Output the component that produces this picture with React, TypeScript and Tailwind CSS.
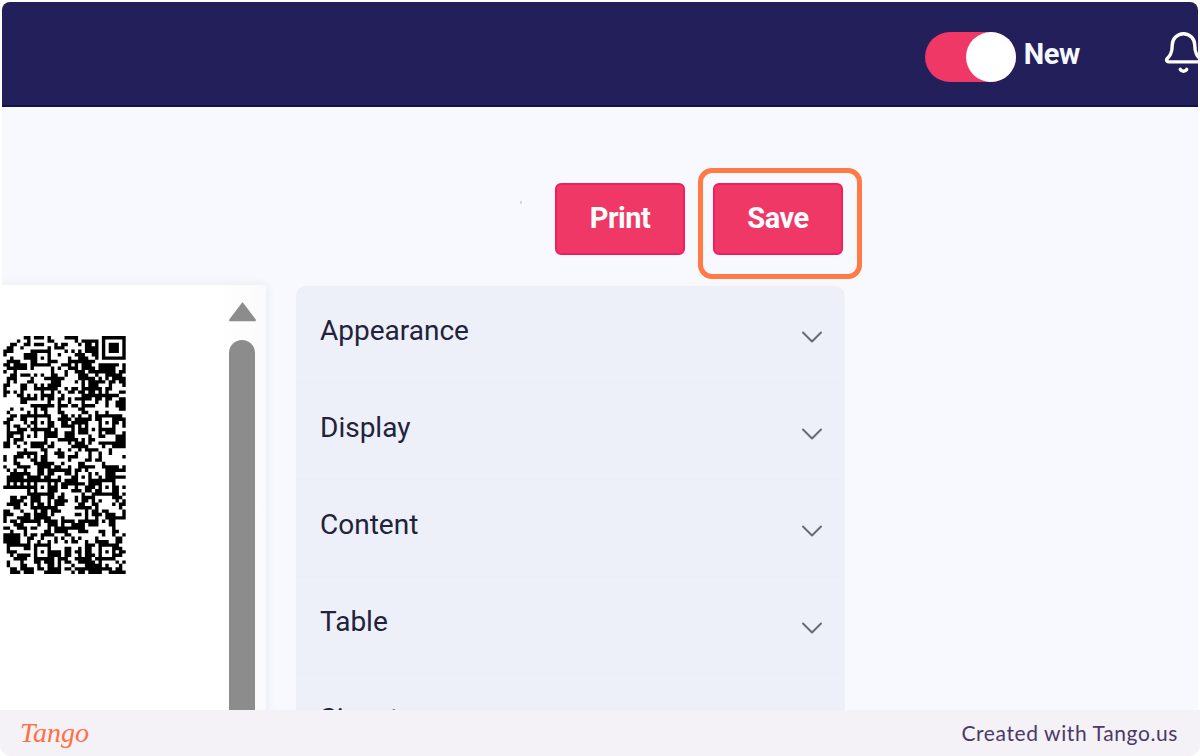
import { Bell, ChevronDown } from 'lucide-react';

const sections = ['Appearance', 'Display', 'Content', 'Table', 'Signature'];

const COLS = 36;
const ROWS = 70;
const alignments = [
  [11, 6],
  [11, 25],
  [30, 25],
  [11, 44],
  [30, 44],
  [11, 63],
  [30, 63],
];

function buildQrPath() {
  let seed = 20240611;
  const next = () => {
    seed = (seed * 1664525 + 1013904223) % 4294967296;
    return seed / 4294967296;
  };
  const cells: boolean[][] = [];
  for (let r = 0; r < ROWS; r++) {
    const row: boolean[] = [];
    for (let c = 0; c < COLS; c++) {
      const above = r > 0 ? cells[r - 1][c] : false;
      const left = c > 0 ? row[c - 1] : false;
      row.push(next() < 0.34 + (above ? 0.16 : 0) + (left ? 0.16 : 0));
    }
    cells.push(row);
  }
  // finder in the top right corner
  for (let r = 0; r < 8; r++) {
    for (let c = 28; c < COLS; c++) {
      const x = c - 29;
      const edge = x === 0 || x === 6 || r === 0 || r === 6;
      const core = x >= 2 && x <= 4 && r >= 2 && r <= 4;
      cells[r][c] = x >= 0 && r < 7 && (edge || core);
    }
  }
  for (const [cx, cy] of alignments) {
    for (let y = -2; y <= 2; y++) {
      for (let x = -2; x <= 2; x++) {
        const ring = Math.abs(x) === 2 || Math.abs(y) === 2;
        cells[cy + y][cx + x] = ring || (x === 0 && y === 0);
      }
    }
  }
  let d = '';
  cells.forEach((row, r) =>
    row.forEach((on, c) => {
      if (on) d += `M${c} ${r}h1v1h-1z`;
    })
  );
  return d;
}

const qrPath = buildQrPath();

export default function App() {
  return (
    <div className="flex h-[756px] w-[1200px] flex-col overflow-hidden bg-white font-['Roboto',sans-serif]">
      <div className="min-h-0 flex-1 px-[2px] pt-[2px]">
        <div className="flex h-full flex-col overflow-hidden rounded-t-[8px] bg-[#f8f9fe]">
          <header className="flex h-[105px] shrink-0 items-center justify-end overflow-hidden border-b-2 border-[#14124a] bg-[#221f5a] pt-[6px]">
            <div className="relative h-[50px] w-[91px] rounded-full bg-[#ef3866]">
              <span className="absolute right-0 top-0 h-[50px] w-[50px] rounded-full bg-white" />
            </div>
            <span className="ml-[8px] mt-[-4px] text-[29px] font-bold tracking-[-0.4px] text-[#f4f8ff]">New</span>
            <Bell size={45} strokeWidth={1.8} className="ml-[81px] mr-[-8px] mt-[-8px] shrink-0 text-white" />
          </header>

          <div className="mt-[76px] flex justify-end gap-[28px] pr-[355px]">
            <span className="mr-[5px] mt-[18px] h-[3px] w-[2px] bg-[#d5d7dd]" />
            <button className="h-[72px] w-[130px] rounded-[6px] border-2 border-[#f01f5c] bg-[#ef3866] text-[29px] font-bold tracking-[-0.5px] text-white">
              Print
            </button>
            <div className="relative">
              <button className="h-[72px] w-[130px] rounded-[6px] border-2 border-[#f01f5c] bg-[#ef3866] text-[29px] font-bold tracking-[-0.5px] text-white">
                Save
              </button>
              <span className="absolute -bottom-[24px] -left-[15px] -right-[19px] -top-[15px] rounded-[14px] border-[5px] border-[#ff7a45]" />
            </div>
          </div>

          <div className="mt-[30px] flex gap-[30px]">
            <div className="flex h-[500px] w-[264px] shrink-0 bg-white shadow-[0_0_10px_rgba(40,40,90,0.08)]">
              <div className="flex-1 pt-[51px]">
                <svg viewBox={`0 0 ${COLS} ${ROWS}`} className="h-[238px] w-[125px] blur-[0.6px]">
                  <path d={qrPath} fill="#000" />
                </svg>
              </div>
              <div className="flex w-[46px] flex-col items-center bg-gradient-to-r from-white to-[#fafafc] pr-[2px] pt-[15px]">
                <svg viewBox="0 0 31 23" className="h-[23px] w-[31px]">
                  <path d="M15.5 2 L29 20 Q30 22 28 22 H3 Q1 22 2 20 Z" fill="#8c8c8c" />
                </svg>
                <div className="mt-[18px] h-[460px] w-[26px] rounded-t-full bg-[#8c8c8c]" />
              </div>
            </div>

            <div className="mt-[1px] h-[500px] w-[549px] shrink-0 rounded-t-[10px] bg-[#edf0f8]">
              {sections.map((name) => (
                <div key={name} className="flex h-[97px] items-start justify-between border-b border-[#eaeef6] pl-[24px] pr-[15px] pt-[27px]">
                  <span className="text-[28px] leading-[36px] text-[#22223a]">{name}</span>
                  <ChevronDown size={36} strokeWidth={1.3} className="mt-[6px] text-[#666a70]" />
                </div>
              ))}
            </div>
          </div>
        </div>
      </div>

      <footer className="flex h-[46px] shrink-0 items-center justify-between rounded-b-[10px] bg-[#f4f1f7] pl-[20px] pr-[22px]">
        <span className="font-['Liberation_Serif',serif] text-[28px] italic leading-none text-[#ff7043]">Tango</span>
        <span className="font-['Lato',sans-serif] text-[21px] tracking-[0.6px] text-[#4a3a66]">Created with Tango.us</span>
      </footer>
    </div>
  );
}
